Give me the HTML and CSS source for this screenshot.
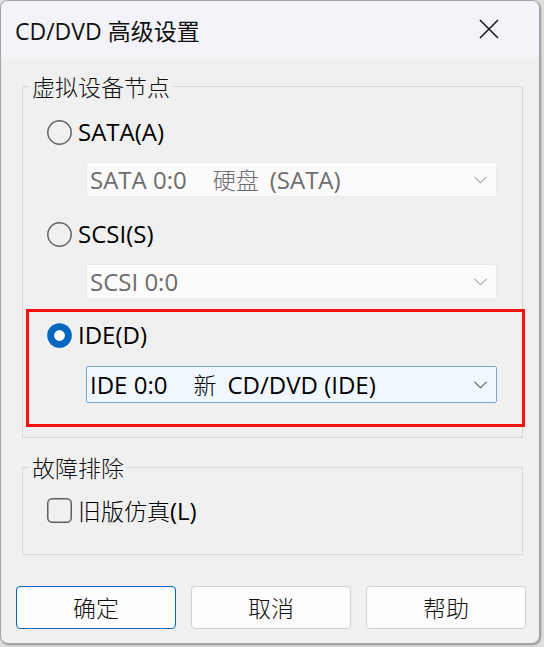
FILE: index.html
```html
<!DOCTYPE html>
<html lang="zh-CN">
<head>
<meta charset="utf-8">
<title>CD/DVD 高级设置</title>
<link rel="stylesheet" href="styles.css">
</head>
<body>
<div class="window">
  <div class="titlebar">
    <span class="title">CD/DVD 高级设置</span>
    <svg class="close" width="20" height="20" viewBox="0 0 20 20"><path d="M1 1 L19 19 M19 1 L1 19" stroke="#1b1b1b" stroke-width="1.6" fill="none"/></svg>
  </div>
  <div class="content">
    <fieldset class="group group-node">
      <legend class="cjk">虚拟设备节点</legend>
      <div class="opt">
        <svg class="radio" width="25" height="25" viewBox="0 0 25 25"><circle cx="12.5" cy="12.5" r="11.7" fill="none" stroke="#646464" stroke-width="1.5"/></svg>
        <span class="opt-label">SATA(A)</span>
      </div>
      <div class="combo disabled">
        <span class="combo-text">SATA 0:0<span class="sep"></span><span class="cjk word">硬盘</span>(SATA)</span>
        <svg class="chev" width="13" height="8" viewBox="0 0 13 8"><path d="M0.5 0.8 L6.5 6.8 L12.5 0.8" stroke="#a8a8a8" stroke-width="1.1" fill="none"/></svg>
      </div>
      <div class="opt opt-gap">
        <svg class="radio" width="25" height="25" viewBox="0 0 25 25"><circle cx="12.5" cy="12.5" r="11.7" fill="none" stroke="#646464" stroke-width="1.5"/></svg>
        <span class="opt-label">SCSI(S)</span>
      </div>
      <div class="combo disabled">
        <span class="combo-text">SCSI 0:0</span>
        <svg class="chev" width="13" height="8" viewBox="0 0 13 8"><path d="M0.5 0.8 L6.5 6.8 L12.5 0.8" stroke="#a8a8a8" stroke-width="1.1" fill="none"/></svg>
      </div>
      <div class="highlight">
        <div class="opt">
          <svg class="radio" width="25" height="25" viewBox="0 0 25 25"><circle cx="12.5" cy="12.5" r="12.3" fill="#0067c0"/><circle cx="12.5" cy="12.5" r="5.4" fill="#ffffff"/></svg>
          <span class="opt-label">IDE(D)</span>
        </div>
        <div class="combo active">
          <span class="combo-text">IDE 0:0<span class="sep"></span><span class="cjk word">新</span>CD/DVD (IDE)</span>
          <svg class="chev" width="13" height="8" viewBox="0 0 13 8"><path d="M0.5 0.8 L6.5 6.8 L12.5 0.8" stroke="#5a5a5a" stroke-width="1.1" fill="none"/></svg>
        </div>
      </div>
    </fieldset>
    <fieldset class="group group-trouble">
      <legend class="cjk">故障排除</legend>
      <div class="opt">
        <svg class="check" width="25" height="25" viewBox="0 0 25 25"><rect x="0.75" y="0.75" width="23.5" height="23.5" rx="4.5" fill="none" stroke="#5f5f5f" stroke-width="1.5"/></svg>
        <span class="opt-label"><span class="cjk">旧版仿真</span>(L)</span>
      </div>
    </fieldset>
    <div class="buttons">
      <button class="btn default"><span class="cjk">确定</span></button>
      <button class="btn"><span class="cjk">取消</span></button>
      <button class="btn"><span class="cjk">帮助</span></button>
    </div>
  </div>
</div>
</body>
</html>
```
FILE: styles.css
```css
html, body {
  margin: 0;
  padding: 0;
}
body {
  background: #dedede;
  width: 544px;
  height: 647px;
  overflow: hidden;
  font-family: "Open Sans", "Noto Sans CJK SC", sans-serif;
  font-size: 24px;
  color: #000;
}
.cjk {
  font-family: "Noto Sans CJK SC", sans-serif;
  font-size: 23px;
  font-weight: 300;
}
.word {
  margin-right: 11px;
}
.window {
  width: 538px;
  height: 642px;
  background: #f0f0f0;
  border: 1px solid #a3a3a3;
  border-radius: 8px;
  overflow: hidden;
  box-shadow: 1px 1px 2px rgba(0, 0, 0, 0.35);
  display: flex;
  flex-direction: column;
}
.titlebar {
  height: 57px;
  background: #f3f3f9;
  display: flex;
  align-items: center;
  padding-left: 14px;
  flex-shrink: 0;
}
.title {
  font-size: 23px;
  line-height: 30px;
  padding-top: 2px;
  color: #111;
}
.close {
  margin-left: auto;
  margin-right: 40px;
  margin-top: -2px;
}
.content {
  display: flex;
  flex-direction: column;
}
.group {
  margin: 0 0 0 21px;
  width: 501px;
  box-sizing: border-box;
  border: 1px solid #d9d9d9;
  padding: 0;
  min-width: 0;
}
.group legend {
  margin-left: 7px;
  padding: 0 2px;
  line-height: 28px;
  height: 28px;
  color: #111;
}
.group-node {
  margin-top: 14px;
  padding-top: 14px;
  padding-bottom: 10px;
}
.group-trouble {
  margin-top: 15px;
  padding-top: 11px;
  padding-bottom: 26px;
}
.opt {
  display: flex;
  align-items: center;
  height: 36px;
  padding-left: 24px;
}
.opt-label {
  margin-left: 6px;
  line-height: 36px;
  white-space: nowrap;
}
.opt-gap {
  margin-top: 19px;
}
.radio, .check {
  flex-shrink: 0;
}
.combo {
  margin-left: 63px;
  width: 411px;
  height: 35px;
  box-sizing: border-box;
  margin-top: 12px;
  display: flex;
  align-items: center;
  padding-left: 3px;
  padding-right: 9px;
  border: 1px solid #ebebeb;
  border-radius: 2px;
}
.combo.disabled {
  background: #fbfbfb;
  color: #6d6d6d;
}
.combo.active {
  background: #f1f7fe;
  border-color: #7aa6d6;
  height: 37px;
  margin-top: 13px;
  margin-left: 57px;
}
.combo-text {
  line-height: 33px;
  white-space: nowrap;
}
.sep {
  display: inline-block;
  width: 26px;
}
.chev {
  margin-left: auto;
}
.highlight {
  margin: 10px -3px 0 3px;
  border: 3px solid #ff1010;
  padding: 5px 0 21px 0;
}
.highlight .opt {
  padding-left: 18px;
}
.buttons {
  display: flex;
  gap: 15px;
  margin-top: 31px;
  padding-left: 15px;
}
.btn {
  width: 160px;
  height: 43px;
  box-sizing: border-box;
  background: #fdfdfd;
  border: 1px solid #d0d0d0;
  border-radius: 4px;
  font-family: "Open Sans", "Noto Sans CJK SC", sans-serif;
  font-size: 23px;
  line-height: 40px;
  color: #111;
  padding: 0;
  letter-spacing: 0;
}
.btn.default {
  border: 1.5px solid #0067c0;
}
```
